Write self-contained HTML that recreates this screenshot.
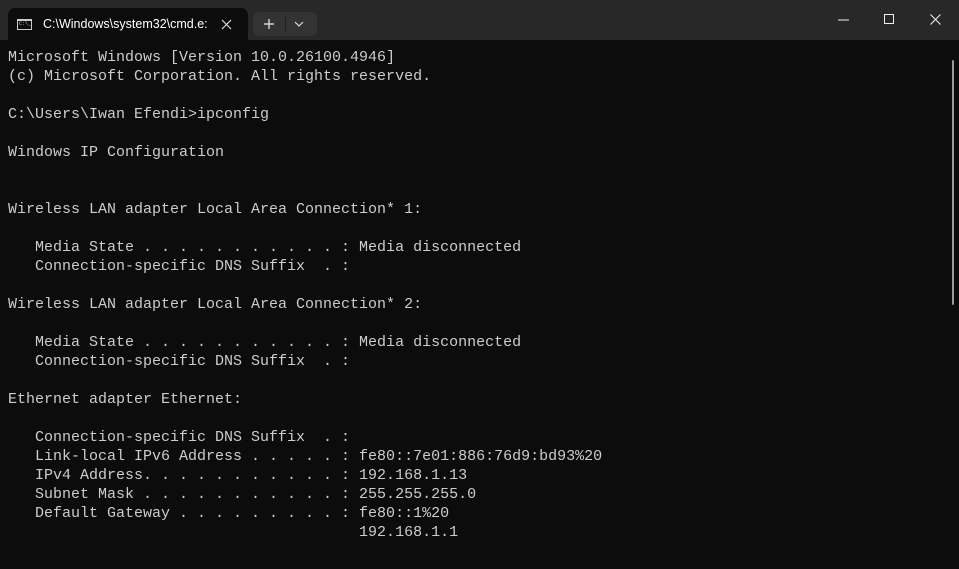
<!DOCTYPE html>
<html><head><meta charset="utf-8"><style>
*{margin:0;padding:0;box-sizing:border-box}
body{width:959px;height:569px;background:#0c0c0c;overflow:hidden;position:relative;font-family:"Liberation Sans",sans-serif}
.bar{position:absolute;left:0;top:0;width:959px;height:40px;background:#282828}
.tab{position:absolute;left:8px;top:8px;width:240px;height:32px;background:#0c0c0c;border-radius:7px 7px 0 0}
.tab .t{position:absolute;left:35px;top:9px;color:#fff;font-size:12.5px;white-space:nowrap;width:172px;overflow:hidden}
.icon{position:absolute;left:9px;top:11px;width:15px;height:11px;border:1.5px solid #ccc;border-top-width:2.5px}
.icon span{position:absolute;left:1px;top:0px;font-size:5px;color:#ccc;font-family:"Liberation Mono",monospace}
.btns{position:absolute;left:253px;top:12px;width:64px;height:24px;background:#333;border-radius:5px}
pre{position:absolute;left:8px;top:48px;color:#cccccc;font-family:"Liberation Mono",monospace;font-size:15px;line-height:19px}
.sb{position:absolute;left:952px;top:60px;width:2px;height:245px;background:#9a9a9a;border-radius:1px}
</style></head><body>
<div class="bar">
<div class="tab"><div class="icon"><span>C:\_</span></div><div class="t">C:\Windows\system32\cmd.e:</div>
<svg style="position:absolute;left:213px;top:11px" width="11" height="11"><path d="M1 1L10 10M10 1L1 10" stroke="#ddd" stroke-width="1.2"/></svg></div>
<div class="btns">
<svg style="position:absolute;left:10px;top:6px" width="12" height="12"><path d="M6 1V11M1 6H11" stroke="#eee" stroke-width="1.2"/></svg>
<div style="position:absolute;left:32px;top:4px;width:1px;height:16px;background:#222"></div>
<svg style="position:absolute;left:41px;top:9px" width="10" height="6"><path d="M1 1L5 5L9 1" stroke="#ddd" stroke-width="1.2" fill="none"/></svg>
</div>
<svg style="position:absolute;left:838px;top:19px" width="12" height="2"><path d="M0 1H11" stroke="#eee" stroke-width="1"/></svg>
<svg style="position:absolute;left:884px;top:14px" width="11" height="11"><rect x="0.5" y="0.5" width="9" height="9" stroke="#eee" fill="none"/></svg>
<svg style="position:absolute;left:930px;top:14px" width="11" height="11"><path d="M0.5 0.5L10.5 10.5M10.5 0.5L0.5 10.5" stroke="#eee" stroke-width="1.1"/></svg>
</div>
<pre>Microsoft Windows [Version 10.0.26100.4946]
(c) Microsoft Corporation. All rights reserved.

C:\Users\Iwan Efendi>ipconfig

Windows IP Configuration


Wireless LAN adapter Local Area Connection* 1:

   Media State . . . . . . . . . . . : Media disconnected
   Connection-specific DNS Suffix  . :

Wireless LAN adapter Local Area Connection* 2:

   Media State . . . . . . . . . . . : Media disconnected
   Connection-specific DNS Suffix  . :

Ethernet adapter Ethernet:

   Connection-specific DNS Suffix  . :
   Link-local IPv6 Address . . . . . : fe80::7e01:886:76d9:bd93%20
   IPv4 Address. . . . . . . . . . . : 192.168.1.13
   Subnet Mask . . . . . . . . . . . : 255.255.255.0
   Default Gateway . . . . . . . . . : fe80::1%20
                                       192.168.1.1</pre>
<div class="sb"></div>
</body></html>
